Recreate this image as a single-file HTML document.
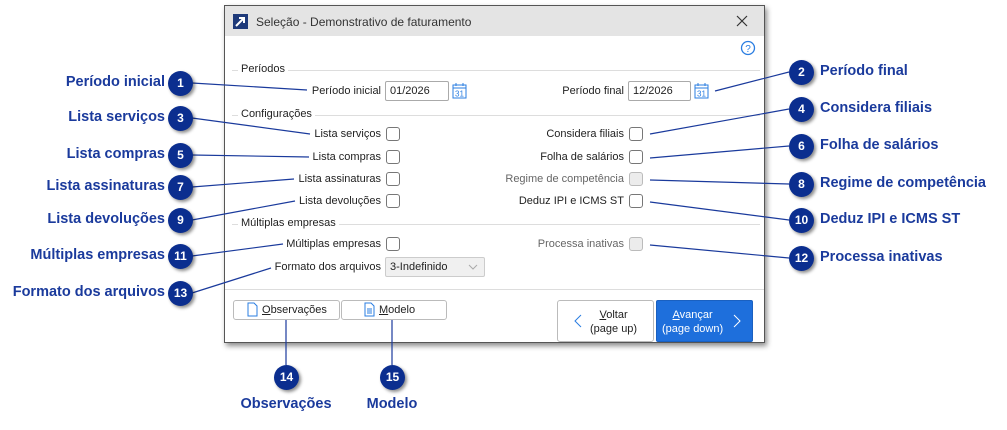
<!DOCTYPE html>
<html><head><meta charset="utf-8"><style>
*{margin:0;padding:0;box-sizing:border-box}
body{width:1007px;height:430px;background:#fff;position:relative;overflow:hidden;font-family:"Liberation Sans",sans-serif}
.a{position:absolute}
.dlg{left:224px;top:5px;width:541px;height:338px;border:1px solid #555;background:#fff;box-shadow:2px 3px 5px rgba(0,0,0,.45)}
.tb{left:0;top:0;width:539px;height:30px;background:#e4e4e4}
.t{font-size:11px;color:#222;white-space:nowrap}
.r{text-align:right}
.g{color:#666}
.cb{width:14px;height:14px;border:1px solid #777;border-radius:3px;background:#fff}
.cb.d{border-color:#bbb;background:#ececec}
.hl{height:1px;background:#ddd}
.inp{border:1px solid #aaa;border-radius:2px;height:20px;font-size:11px;padding:3px 4px;color:#222}
.btn{border:1px solid #bbb;border-radius:3px;background:#fff;font-size:11px;color:#222}
.lab{font-weight:bold;font-size:14.5px;color:#1a3a9c;white-space:nowrap}
.c{width:25px;height:25px;border-radius:50%;background:#0b2e8f;color:#fff;font-weight:bold;font-size:12px;text-align:center;line-height:25px;box-shadow:2px 2px 3px rgba(0,0,0,.45);z-index:3}
</style></head><body>
<div class="a dlg">
 <div class="a tb">
  <div class="a" style="left:8px;top:8px;width:15px;height:15px;background:#1e3a7a"></div>
  <svg class="a" style="left:8px;top:8px" width="15" height="15"><path d="M3 12 L11 4 M6 4 H11 V9" stroke="#fff" stroke-width="2" fill="none"/></svg>
  <div class="a t" style="left:31px;top:9px;font-size:12px;color:#333">Seleção - Demonstrativo de faturamento</div>
  <svg class="a" style="left:511px;top:9px" width="12" height="12"><path d="M1 1L11 11M11 1L1 11" stroke="#333" stroke-width="1.2"/></svg>
 </div>
 <svg class="a" style="left:515px;top:34px" width="16" height="16"><circle cx="8" cy="8" r="6.5" stroke="#2a7de1" fill="none" stroke-width="1.3"/><text x="8" y="12" font-size="10" fill="#2a7de1" text-anchor="middle" font-family="Liberation Sans">?</text></svg>
</div>
<div class="a hl" style="left:232px;top:70px;width:528px"></div>
<div class="a t" style="left:238px;top:63px;background:#fff;padding:0 3px">Períodos</div>
<div class="a t r" style="left:250px;width:131px;top:85px">Período inicial</div>
<div class="a inp" style="left:385px;top:81px;width:64px">01/2026</div>
<div class="a t r" style="left:500px;width:124px;top:85px">Período final</div>
<div class="a inp" style="left:628px;top:81px;width:63px">12/2026</div>
<svg class="a" style="left:452px;top:82px" width="15" height="17"><rect x="1" y="3" width="13" height="13" fill="none" stroke="#2a7de1"/><line x1="1" y1="6" x2="14" y2="6" stroke="#2a7de1"/><line x1="4" y1="1" x2="4" y2="4" stroke="#2a7de1"/><line x1="11" y1="1" x2="11" y2="4" stroke="#2a7de1"/><text x="7.5" y="14.5" font-size="8" fill="#2a7de1" text-anchor="middle" font-family="Liberation Sans">31</text></svg>
<svg class="a" style="left:694px;top:82px" width="15" height="17"><rect x="1" y="3" width="13" height="13" fill="none" stroke="#2a7de1"/><line x1="1" y1="6" x2="14" y2="6" stroke="#2a7de1"/><line x1="4" y1="1" x2="4" y2="4" stroke="#2a7de1"/><line x1="11" y1="1" x2="11" y2="4" stroke="#2a7de1"/><text x="7.5" y="14.5" font-size="8" fill="#2a7de1" text-anchor="middle" font-family="Liberation Sans">31</text></svg>

<div class="a hl" style="left:232px;top:115px;width:528px"></div>
<div class="a t" style="left:238px;top:108px;background:#fff;padding:0 3px">Configurações</div>
<div class="a t r" style="left:250px;width:131px;top:128px">Lista serviços</div><div class="a cb" style="left:386px;top:127px"></div>
<div class="a t r" style="left:250px;width:131px;top:151px">Lista compras</div><div class="a cb" style="left:386px;top:150px"></div>
<div class="a t r" style="left:250px;width:131px;top:173px">Lista assinaturas</div><div class="a cb" style="left:386px;top:172px"></div>
<div class="a t r" style="left:250px;width:131px;top:195px">Lista devoluções</div><div class="a cb" style="left:386px;top:194px"></div>
<div class="a t r" style="left:450px;width:174px;top:128px">Considera filiais</div><div class="a cb" style="left:629px;top:127px"></div>
<div class="a t r" style="left:450px;width:174px;top:151px">Folha de salários</div><div class="a cb" style="left:629px;top:150px"></div>
<div class="a t r g" style="left:450px;width:174px;top:173px">Regime de competência</div><div class="a cb d" style="left:629px;top:172px"></div>
<div class="a t r" style="left:450px;width:174px;top:195px">Deduz IPI e ICMS ST</div><div class="a cb" style="left:629px;top:194px"></div>

<div class="a hl" style="left:232px;top:224px;width:528px"></div>
<div class="a t" style="left:238px;top:217px;background:#fff;padding:0 3px">Múltiplas empresas</div>
<div class="a t r" style="left:250px;width:131px;top:238px">Múltiplas empresas</div><div class="a cb" style="left:386px;top:237px"></div>
<div class="a t r g" style="left:450px;width:174px;top:238px">Processa inativas</div><div class="a cb d" style="left:629px;top:237px"></div>
<div class="a t r" style="left:250px;width:131px;top:261px">Formato dos arquivos</div>
<div class="a inp" style="left:385px;top:257px;width:100px;background:#f0f0f0;border-color:#ccc">3-Indefinido</div>
<svg class="a" style="left:468px;top:264px" width="10" height="6"><path d="M1 1L5 5L9 1" stroke="#aaa" fill="none"/></svg>

<div class="a hl" style="left:225px;top:289px;width:539px"></div>
<div class="a btn" style="left:233px;top:300px;width:107px;height:20px"></div>
<svg class="a" style="left:247px;top:302px" width="11" height="15"><path d="M1 1H7L10 4V14H1Z" stroke="#2a7de1" fill="none"/></svg>
<div class="a t" style="left:262px;top:304px"><u>O</u>bservações</div>
<div class="a btn" style="left:341px;top:300px;width:106px;height:20px"></div>
<svg class="a" style="left:364px;top:302px" width="11" height="15"><path d="M1 1H7L10 4V14H1Z M3 7H8M3 9H8M3 11H8" stroke="#2a7de1" fill="none"/></svg>
<div class="a t" style="left:379px;top:304px"><u>M</u>odelo</div>
<div class="a btn" style="left:557px;top:300px;width:97px;height:42px"></div>
<svg class="a" style="left:574px;top:314px" width="8" height="14"><path d="M7 1L1 7L7 13" stroke="#2a7de1" fill="none"/></svg>
<div class="a t" style="left:590px;top:308px;text-align:center;line-height:14px"><u>V</u>oltar<br>(page up)</div>
<div class="a" style="left:656px;top:300px;width:97px;height:42px;background:#1e6fdc;border:1px solid #1a60c0;border-radius:2px"></div>
<div class="a t" style="left:662px;top:308px;text-align:center;line-height:14px;color:#fff"><u>A</u>vançar<br>(page down)</div>
<svg class="a" style="left:733px;top:314px" width="8" height="14"><path d="M1 1L7 7L1 13" stroke="#fff" fill="none"/></svg>

<svg class="a" style="left:0;top:0;z-index:2" width="1007" height="430">
<g stroke="#1a3a9c" stroke-width="1.2" fill="none">
<line x1="192" y1="83" x2="307" y2="90"/>
<line x1="192" y1="118" x2="310" y2="134"/>
<line x1="192" y1="155" x2="309" y2="157"/>
<line x1="192" y1="187" x2="294" y2="179"/>
<line x1="192" y1="220" x2="295" y2="201"/>
<line x1="192" y1="256" x2="283" y2="244"/>
<line x1="192" y1="293" x2="271" y2="268"/>
<line x1="789" y1="72" x2="715" y2="91"/>
<line x1="789" y1="109" x2="650" y2="134"/>
<line x1="789" y1="146" x2="650" y2="158"/>
<line x1="789" y1="184" x2="650" y2="180"/>
<line x1="789" y1="220" x2="650" y2="202"/>
<line x1="789" y1="258" x2="650" y2="245"/>
<line x1="286" y1="320" x2="286" y2="365"/>
<line x1="392" y1="320" x2="392" y2="365"/>
</g></svg>

<div class="a c" style="left:168px;top:71px">1</div><div class="a lab r" style="left:0;width:165px;top:74px">Período inicial</div>
<div class="a c" style="left:168px;top:106px">3</div><div class="a lab r" style="left:0;width:165px;top:109px">Lista serviços</div>
<div class="a c" style="left:168px;top:143px">5</div><div class="a lab r" style="left:0;width:165px;top:146px">Lista compras</div>
<div class="a c" style="left:168px;top:175px">7</div><div class="a lab r" style="left:0;width:165px;top:178px">Lista assinaturas</div>
<div class="a c" style="left:168px;top:208px">9</div><div class="a lab r" style="left:0;width:165px;top:211px">Lista devoluções</div>
<div class="a c" style="left:168px;top:244px">11</div><div class="a lab r" style="left:0;width:165px;top:247px">Múltiplas empresas</div>
<div class="a c" style="left:168px;top:281px">13</div><div class="a lab r" style="left:0;width:165px;top:284px">Formato dos arquivos</div>
<div class="a c" style="left:789px;top:60px">2</div><div class="a lab" style="left:820px;top:63px">Período final</div>
<div class="a c" style="left:789px;top:97px">4</div><div class="a lab" style="left:820px;top:100px">Considera filiais</div>
<div class="a c" style="left:789px;top:134px">6</div><div class="a lab" style="left:820px;top:137px">Folha de salários</div>
<div class="a c" style="left:789px;top:172px">8</div><div class="a lab" style="left:820px;top:175px">Regime de competência</div>
<div class="a c" style="left:789px;top:208px">10</div><div class="a lab" style="left:820px;top:211px">Deduz IPI e ICMS ST</div>
<div class="a c" style="left:789px;top:246px">12</div><div class="a lab" style="left:820px;top:249px">Processa inativas</div>
<div class="a c" style="left:274px;top:365px">14</div><div class="a lab" style="left:236px;width:100px;text-align:center;top:396px">Observações</div>
<div class="a c" style="left:380px;top:365px">15</div><div class="a lab" style="left:342px;width:100px;text-align:center;top:396px">Modelo</div>
</body></html>
